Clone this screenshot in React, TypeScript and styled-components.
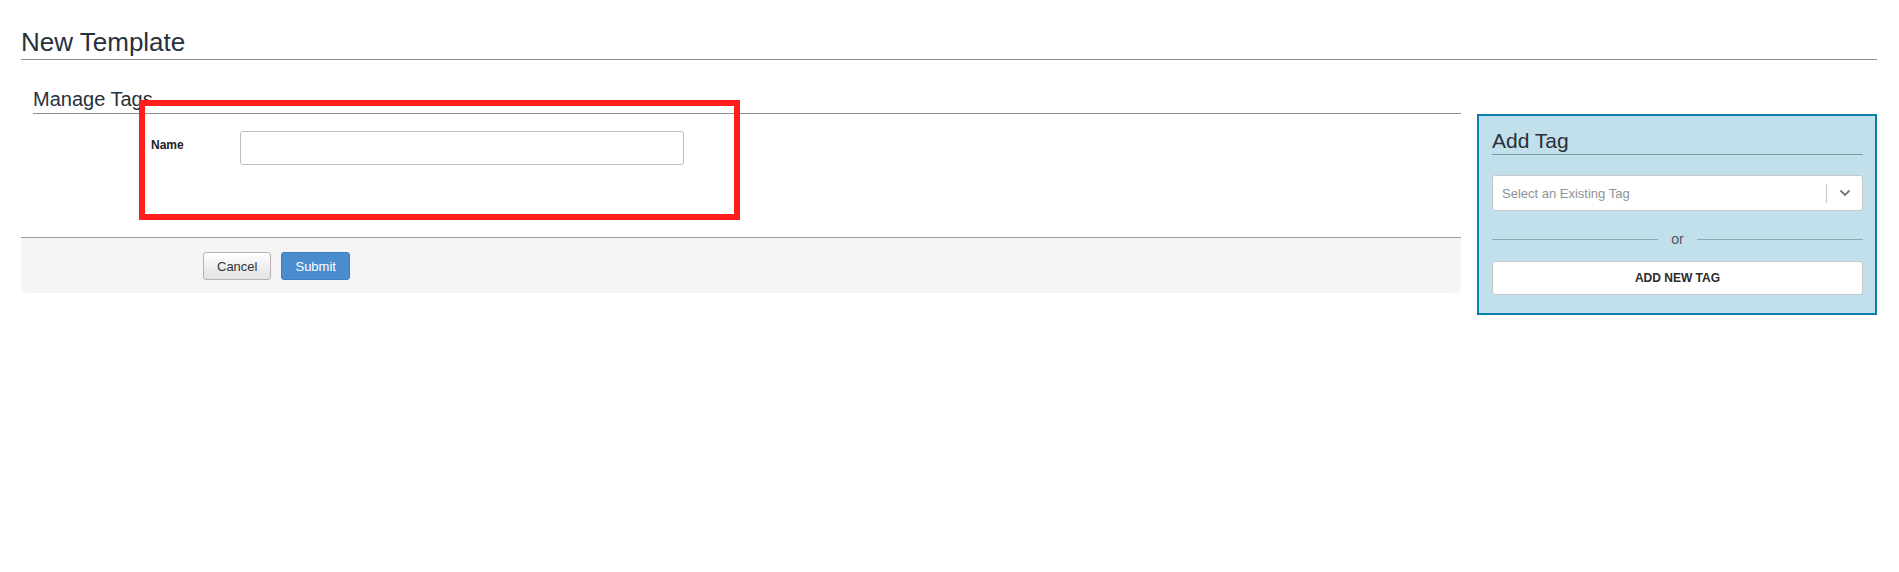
import styled, { createGlobalStyle } from "styled-components";

const GlobalStyle = createGlobalStyle`
  html, body {
    margin: 0;
    padding: 0;
    background: #ffffff;
    font-family: "Liberation Sans", Arial, sans-serif;
    color: #333;
  }
`;

const Page = styled.div`
  padding: 25px 22px 0 21px;
`;

const PageTitle = styled.h1`
  margin: 0;
  font-size: 26px;
  line-height: 34px;
  font-weight: 400;
  color: #27313d;
  border-bottom: 1px solid #8c9096;
`;

const Layout = styled.div`
  display: flex;
  align-items: flex-start;
  gap: 16px;
`;

const Main = styled.div`
  position: relative;
  flex: 0 0 1440px;
`;

const SectionTitle = styled.h2`
  margin: 27px 0 0 12px;
  padding-bottom: 2px;
  font-size: 20px;
  line-height: 24px;
  font-weight: 400;
  color: #27313d;
  border-bottom: 1px solid #8e9095;
`;

const FormBody = styled.div`
  padding: 17px 0 72px 130px;
`;

const FieldRow = styled.div`
  display: flex;
  align-items: flex-start;
`;

const Label = styled.label`
  width: 89px;
  padding-top: 7px;
  font-size: 12px;
  font-weight: 700;
  color: #222;
`;

const TextInput = styled.input`
  box-sizing: border-box;
  width: 444px;
  height: 34px;
  border: 1px solid #bdbdbd;
  border-radius: 3px;
  background: #fff;
`;

const Highlight = styled.div`
  position: absolute;
  left: 118px;
  top: 40px;
  width: 601px;
  height: 120px;
  box-sizing: border-box;
  border: 6px solid #ff1d1d;
  pointer-events: none;
`;

const Footer = styled.div`
  display: flex;
  gap: 10px;
  padding: 14px 0 13px 182px;
  background: #f5f5f5;
  border-top: 1px solid #9a9a9a;
  border-radius: 0 0 6px 6px;
`;

const Button = styled.button<{ $primary?: boolean }>`
  height: 28px;
  padding: 0 13px;
  font-family: "Liberation Sans", Arial, sans-serif;
  font-size: 13px;
  border-radius: 3px;
  border: 1px solid ${(p) => (p.$primary ? "#3c7fc2" : "#b3b3b3")};
  color: ${(p) => (p.$primary ? "#fff" : "#333")};
  background: ${(p) =>
    p.$primary ? "#4a8dcf" : "linear-gradient(#ffffff, #e2e2e2)"};
`;

const Sidebar = styled.aside`
  flex: 0 0 400px;
  box-sizing: border-box;
  margin-top: 54px;
  padding: 12px 12px 18px 13px;
  background: #c1e0ec;
  border: 2px solid #0a7eaf;
`;

const SideTitle = styled.h3`
  margin: 0;
  font-size: 21px;
  line-height: 26px;
  font-weight: 400;
  color: #2a2f36;
  border-bottom: 1px solid #7f979f;
`;

const Select = styled.div`
  display: flex;
  align-items: center;
  height: 36px;
  margin-top: 20px;
  box-sizing: border-box;
  background: #fff;
  border: 1px solid #c6c9cc;
  border-radius: 3px;
`;

const Placeholder = styled.span`
  flex: 1;
  padding-left: 9px;
  font-size: 13px;
  color: #8d9299;
`;

const Indicator = styled.span`
  display: flex;
  align-items: center;
  justify-content: center;
  width: 35px;
  height: 19px;
  border-left: 1px solid #c6c9cc;
  color: #777;
`;

const OrRow = styled.div`
  display: flex;
  align-items: center;
  height: 18px;
  margin-top: 19px;
  font-size: 14px;
  color: #555;

  &::before,
  &::after {
    content: "";
    flex: 1;
    height: 1px;
    background: #8fa7af;
  }

  span {
    padding: 0 13px;
  }
`;

const AddButton = styled.button`
  display: block;
  width: 100%;
  height: 34px;
  margin-top: 13px;
  background: #fff;
  border: 1px solid #c6c9cc;
  border-radius: 3px;
  font-family: "Liberation Sans", Arial, sans-serif;
  font-size: 12px;
  font-weight: 700;
  color: #2b2b2b;
`;

const Chevron = () => (
  <svg width="12" height="8" viewBox="0 0 12 8">
    <path d="M1.5 1.5 L6 6 L10.5 1.5" fill="none" stroke="#777" strokeWidth="1.8" />
  </svg>
);

export default function App() {
  return (
    <Page>
      <GlobalStyle />
      <PageTitle>New Template</PageTitle>
      <Layout>
        <Main>
          <SectionTitle>Manage Tags</SectionTitle>
          <FormBody>
            <FieldRow>
              <Label>Name</Label>
              <TextInput type="text" />
            </FieldRow>
          </FormBody>
          <Footer>
            <Button>Cancel</Button>
            <Button $primary>Submit</Button>
          </Footer>
          <Highlight />
        </Main>
        <Sidebar>
          <SideTitle>Add Tag</SideTitle>
          <Select>
            <Placeholder>Select an Existing Tag</Placeholder>
            <Indicator>
              <Chevron />
            </Indicator>
          </Select>
          <OrRow>
            <span>or</span>
          </OrRow>
          <AddButton>ADD NEW TAG</AddButton>
        </Sidebar>
      </Layout>
    </Page>
  );
}
